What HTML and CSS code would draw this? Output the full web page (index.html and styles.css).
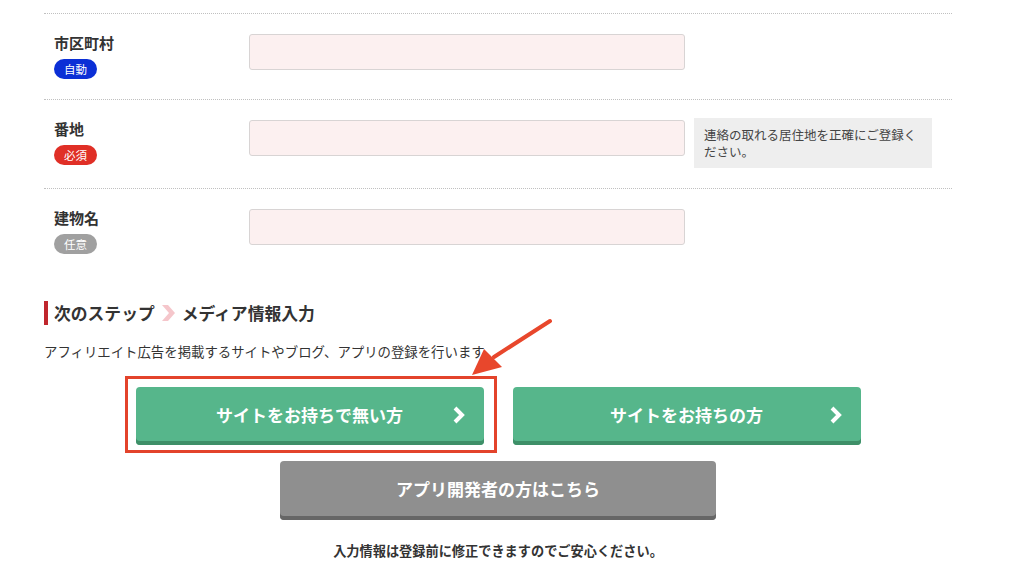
FILE: index.html
```html
<!DOCTYPE html>
<html lang="ja">
<head>
    <meta charset="UTF-8">
    <title>会員登録</title>
    <link rel="stylesheet" href="styles.css">
</head>
<body>
    <div class="page">
        <div class="form-row">
            <div class="label-col">
                <div class="label">市区町村</div>
                <span class="badge auto">自動</span>
            </div>
            <input class="field" type="text">
        </div>
        <div class="form-row">
            <div class="label-col">
                <div class="label">番地</div>
                <span class="badge must">必須</span>
            </div>
            <input class="field" type="text">
            <div class="help">連絡の取れる居住地を正確にご登録ください。</div>
        </div>
        <div class="form-row">
            <div class="label-col">
                <div class="label">建物名</div>
                <span class="badge any">任意</span>
            </div>
            <input class="field" type="text">
        </div>

        <h2 class="step">
            <span>次のステップ</span>
            <svg class="step-arrow" width="14" height="18" viewBox="0 0 14 18"><polygon points="0,1 6,1 13,9 6,17 0,17 7,9" fill="#f5c6cb"/></svg>
            <span>メディア情報入力</span>
        </h2>
        <p class="lead">アフィリエイト広告を掲載するサイトやブログ、アプリの登録を行います。</p>

        <div class="actions">
            <div class="btn-row">
                <div class="highlight">
                    <a class="btn green" href="#">サイトをお持ちで無い方<svg class="chev" width="14" height="18" viewBox="0 0 14 18"><polyline points="3,2 10,9 3,16" fill="none" stroke="#fff" stroke-width="4" stroke-linejoin="miter"/></svg></a>
                    <span class="frame"></span>
                    <svg class="pointer" width="100" height="70" viewBox="0 0 100 70">
                        <line x1="96" y1="4" x2="40" y2="40" stroke="#e8472c" stroke-width="4" stroke-linecap="round"/>
                        <polygon points="18,58 30,32 48,50" fill="#e8472c"/>
                    </svg>
                </div>
                <a class="btn green" href="#">サイトをお持ちの方<svg class="chev" width="14" height="18" viewBox="0 0 14 18"><polyline points="3,2 10,9 3,16" fill="none" stroke="#fff" stroke-width="4" stroke-linejoin="miter"/></svg></a>
            </div>
            <a class="btn gray" href="#">アプリ開発者の方はこちら</a>
            <p class="note">入力情報は登録前に修正できますのでご安心ください。</p>
        </div>
    </div>
</body>
</html>
```
FILE: styles.css
```css
body {
    margin: 0;
    background: #fff;
    color: #333;
    font-family: "Noto Sans CJK JP", "Noto Sans", sans-serif;
}
.page {
    width: 908px;
    margin-left: 44px;
    padding-top: 13px;
}
.form-row {
    display: flex;
    align-items: flex-start;
    border-top: 1px dotted #c0c0c0;
    padding: 20px 0;
}
.label-col {
    width: 195px;
    padding-left: 10px;
}
.label {
    font-size: 15px;
    font-weight: bold;
    line-height: 18px;
}
.badge {
    display: inline-block;
    margin-top: 7px;
    width: 43px;
    height: 20px;
    border-radius: 10px;
    color: #fff;
    font-size: 11.5px;
    line-height: 20px;
    text-align: center;
}
.badge.auto { background: #0b2fd6; }
.badge.must { background: #e02f26; }
.badge.any { background: #a0a0a0; }
.field {
    box-sizing: border-box;
    width: 436px;
    height: 36px;
    margin: 0;
    background: #fcf0f0;
    border: 1px solid #d8d4d4;
    border-radius: 3px;
}
.help {
    box-sizing: border-box;
    width: 238px;
    height: 50px;
    margin: -2px 0 0 9px;
    padding: 8px 10px;
    background: #eeeeee;
    color: #444;
    font-size: 12.5px;
    line-height: 17px;
}
.step {
    display: flex;
    align-items: center;
    margin: 27px 0 0;
    padding-left: 6px;
    border-left: 4px solid #c0262d;
    height: 24px;
    font-size: 16.8px;
    font-weight: bold;
    line-height: 24px;
}
.step-arrow {
    margin: 0 6px 0 7px;
}
.lead {
    margin: 16px 0 0;
    font-size: 13.4px;
    line-height: 20px;
    color: #333;
}
.actions {
    display: flex;
    flex-direction: column;
    align-items: center;
    margin-top: 26px;
}
.btn-row {
    display: flex;
    gap: 29px;
}
.highlight {
    position: relative;
}
.btn {
    position: relative;
    box-sizing: border-box;
    display: flex;
    align-items: center;
    justify-content: center;
    width: 348px;
    height: 58px;
    padding-bottom: 4px;
    border-radius: 4px;
    color: #fff;
    font-size: 17px;
    font-weight: bold;
    text-decoration: none;
}
.btn.green {
    background: #56b68b;
    box-shadow: inset 0 -4px 0 #3e8f68;
}
.btn.gray {
    width: 436px;
    height: 59px;
    margin-top: 16px;
    background: #8f8f8f;
    box-shadow: inset 0 -4px 0 #666;
}
.chev {
    position: absolute;
    right: 18px;
    top: 19px;
}
.frame {
    position: absolute;
    left: -11px;
    top: -11px;
    right: -13px;
    bottom: -8px;
    border: 3px solid #e3432b;
    pointer-events: none;
}
.pointer {
    position: absolute;
    left: 318px;
    top: -70px;
}
.note {
    margin: 21px 0 0;
    font-size: 13.2px;
    font-weight: bold;
    line-height: 20px;
}
```
